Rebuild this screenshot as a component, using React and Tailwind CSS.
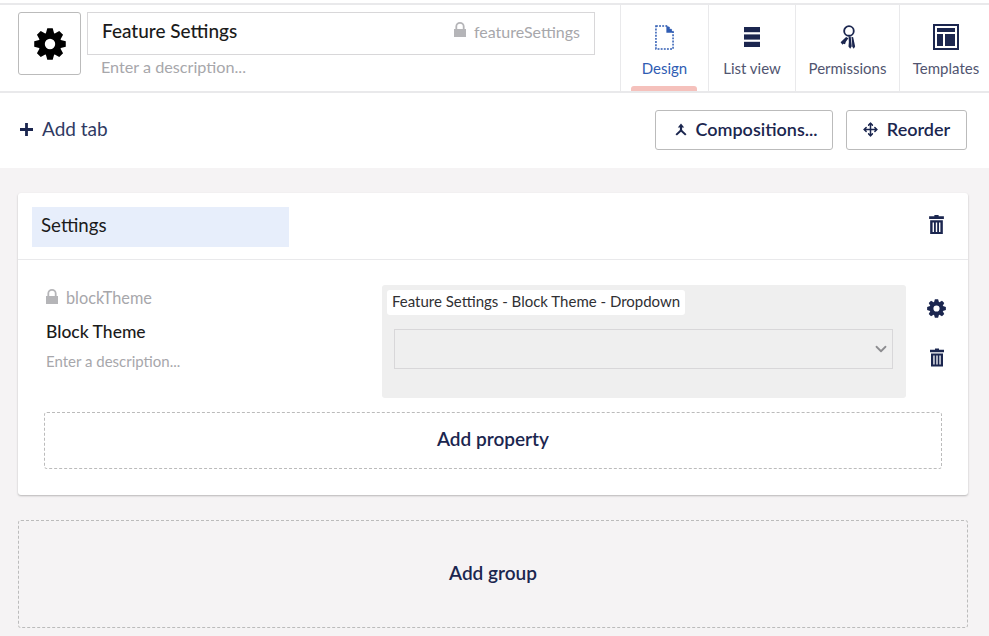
import { Move, ChevronDown } from 'lucide-react';

// 8 toothed cog, same shape as the umbraco settings icon
function gearPath() {
  let d = '';
  for (let i = 0; i < 8; i++) {
    const a = (i * Math.PI) / 4 - Math.PI / 2;
    const pts = [
      [11.6, a - 0.36],
      [16, a - 0.17],
      [16, a + 0.17],
      [11.6, a + 0.36],
    ];
    pts.forEach(([r, t], j) => {
      const x = (16 + r * Math.cos(t)).toFixed(2);
      const y = (16 + r * Math.sin(t)).toFixed(2);
      d += `${i === 0 && j === 0 ? 'M' : 'L'}${x} ${y}`;
    });
  }
  return d + 'zM16 10.8a5.2 5.2 0 1 0 0 10.4 5.2 5.2 0 0 0 0-10.4z';
}

function Gear({ className }) {
  return (
    <svg viewBox="0 0 32 32" className={className} fill="currentColor">
      <path fillRule="evenodd" d={gearPath()} />
    </svg>
  );
}

function Trash({ className }) {
  return (
    <svg viewBox="0 0 14 18" className={className} fill="currentColor">
      <path d="M5 0h4v1.2h5v2.6H0V1.2h5z" />
      <path fillRule="evenodd" d="M1 5h12v13H1zM3.3 7v9h1.3V7zM6.35 7v9h1.3V7zM9.4 7v9h1.3V7z" />
    </svg>
  );
}

function LockIcon({ className }) {
  return (
    <svg viewBox="0 0 12 15" className={className} fill="#b5b5b8">
      <path fillRule="evenodd" d="M6 0a4.6 4.6 0 0 1 4.6 4.6V7H12v8H0V7h1.4V4.6A4.6 4.6 0 0 1 6 0zm0 1.8a2.8 2.8 0 0 0-2.8 2.8V7h5.6V4.6A2.8 2.8 0 0 0 6 1.8z" />
    </svg>
  );
}

function PlusIcon() {
  return (
    <svg viewBox="0 0 13 13" className="w-[13px] h-[13px]" fill="#1b264f">
      <path d="M5.1 0h2.8v5.1H13v2.8H7.9V13H5.1V7.9H0V5.1h5.1z" />
    </svg>
  );
}

function CompositionIcon() {
  return (
    <svg viewBox="0 0 12 13" className="w-[12px] h-[13px]" fill="#1b264f">
      <path d="M6 0.5L9.2 4.5H7.1V7L11.5 11.2 10.1 12.6 6 8.8 1.9 12.6 0.5 11.2 4.9 7V4.5H2.8z" />
    </svg>
  );
}

function DesignIcon() {
  return (
    <svg viewBox="0 0 20 26" className="w-[19px] h-[25px]" fill="none">
      <path d="M1 1h12l6 6v18H1z" stroke="#2f5cb3" strokeWidth="1.6" strokeDasharray="2 1.3" />
      <path d="M12 0l8 8h-8z" fill="#2f5cb3" />
    </svg>
  );
}

function ListIcon() {
  return (
    <svg viewBox="0 0 16 20" className="w-4 h-5" fill="#1b264f">
      <rect y="0" width="16" height="5.2" />
      <rect y="7.4" width="16" height="5.2" />
      <rect y="14.8" width="16" height="5.2" />
    </svg>
  );
}

function KeysIcon() {
  return (
    <svg viewBox="0 0 16 26" className="w-[16px] h-[25px]" fill="#1b264f">
      <circle cx="9" cy="6.2" r="5" fill="none" stroke="#1b264f" strokeWidth="1.9" />
      <path d="M6 12.5l2.4 1.4-2.6 3.6-.9 2.6-1.7-.6-.9 1-2-2.6z" />
      <path d="M8.6 11.6l2.2.4.6 5.2.5 4.8-1.6 2.8-1.8-2.4.4-4.6z" />
      <path d="M11.6 12.2l1.8.5 1.1 5.3.9 4.4-1.4 2.4-1.6-2.2-.2-5z" />
    </svg>
  );
}

function TemplatesIcon() {
  return (
    <svg viewBox="0 0 26 26" className="w-[26px] h-[26px]" fill="#1b264f">
      <path fillRule="evenodd" d="M0 0h26v26H0zM2 2v22h22V2z" />
      <rect x="4" y="4" width="18" height="4" />
      <rect x="4" y="10" width="6" height="12" />
      <rect x="12" y="10" width="10" height="12" />
    </svg>
  );
}

const tabs = [
  { label: 'Design', icon: <DesignIcon />, active: true, width: 'w-[88px]' },
  { label: 'List view', icon: <ListIcon />, width: 'w-[87px]' },
  { label: 'Permissions', icon: <KeysIcon />, width: 'w-[104px]' },
  { label: 'Templates', icon: <TemplatesIcon />, width: 'w-[90px] pl-[3px]' },
];

function Tab({ tab }) {
  return (
    <div className={`relative ${tab.width} h-[86px] border-l border-[#e9e9eb] flex flex-col items-center pt-[18px]`}>
      <div className="h-[28px] flex items-center justify-center">{tab.icon}</div>
      <span className={`mt-[7px] text-[15px] leading-5 whitespace-nowrap ${tab.active ? 'text-[#2f5cb3]' : 'text-[#515570]'}`}>{tab.label}</span>
      {tab.active && <div className="absolute left-[10px] bottom-0 w-[66px] h-[5px] rounded-t-[3px] bg-[#f5c1bc]" />}
    </div>
  );
}

export default function App() {
  return (
    <div className="h-[636px] w-[989px] overflow-hidden bg-[#f5f3f4] text-[#1b264f]" style={{ fontFamily: 'Lato, sans-serif' }}>
      <div className="bg-white pt-[3px]">
        <header className="h-[90px] border-y-2 border-[#e9e9eb] flex items-start">
          <div className="flex-1 flex items-start pl-[18px] pt-[7px]">
            <div className="w-[63px] h-[63px] shrink-0 rounded-[3px] border border-[#bbbbbb] flex items-center justify-center text-black">
              <Gear className="w-[32px] h-[32px]" />
            </div>
            <div className="ml-[6px] w-[508px]">
              <div className="h-[43px] border border-[#d8d7d9] flex items-center justify-between pl-[14px] pr-[14px]">
                <span className="text-[19px] font-medium text-[#1b1b1b] pb-[4px]">Feature Settings</span>
                <span className="flex items-center gap-[8px] text-[16px] text-[#a7a7ab] pb-[4px]">
                  <LockIcon className="w-[12px] h-[15px] mb-[4px]" />
                  featureSettings
                </span>
              </div>
              <div className="pl-[14px] text-[16.2px] leading-6 text-[#a7a7ab]">Enter a description...</div>
            </div>
          </div>
          <nav className="flex">
            {tabs.map((t) => <Tab key={t.label} tab={t} />)}
          </nav>
        </header>
        <div className="h-[75px] pb-[2px] flex items-center justify-between pl-[20px] pr-[22px]">
          <button className="flex items-center gap-[9px] text-[19px] text-[#2f3a63]">
            <PlusIcon />
            Add tab
          </button>
          <div className="flex gap-[13px]">
            <button className="w-[178px] h-[40px] rounded-[3px] border border-[#bbbbbb] flex items-center justify-center gap-[8px] pl-[5px] text-[18px] text-[#1b264f]">
              <CompositionIcon />
              <span className="font-semibold">Compositions...</span>
            </button>
            <button className="w-[121px] h-[40px] rounded-[3px] border border-[#bbbbbb] flex items-center justify-center gap-[9px] text-[18px] text-[#1b264f]">
              <Move className="w-[15px] h-[15px]" strokeWidth={2.4} />
              <span className="font-semibold">Reorder</span>
            </button>
          </div>
        </div>
      </div>

      <main className="pt-[25px] pl-[18px] pr-[21px]">
        <section className="bg-white rounded-[3px] shadow-[0_1px_2px_rgba(0,0,0,0.25)] h-[302px]">
          <div className="h-[67px] border-b border-[#e9e9eb] flex items-start justify-between pt-[14px] pl-[14px] pr-[24px]">
            <div className="w-[257px] h-[40px] bg-[#e7eefb] flex items-center pl-[9px] pb-[4px] text-[18.7px] text-[#1b1b1b]">Settings</div>
            <Trash className="w-[15px] h-[19px] mt-[8px] text-[#1b264f]" />
          </div>
          <div className="pt-[25px] pl-[26px] pr-[22px]">
            <div className="flex items-start">
              <div className="w-[338px] shrink-0 pl-[2px]">
                <div className="flex items-center gap-[8px] text-[16.3px] leading-5 text-[#a7a7ab] pt-[3px]">
                  <LockIcon className="w-[12px] h-[15px] mb-[4px]" />
                  blockTheme
                </div>
                <div className="mt-[12px] text-[17.5px] leading-6 font-medium text-[#1b1b1b]">Block Theme</div>
                <div className="mt-[7px] text-[15px] leading-5 text-[#a7a7ab]">Enter a description...</div>
              </div>
              <div className="w-[524px] h-[113px] shrink-0 rounded-[3px] bg-[#efefef] pt-[5px] pl-[5px]">
                <span className="block w-max bg-white rounded-[3px] px-[5px] pb-[2px] pt-[0px] text-[15px] leading-[23px] text-[#303033]">Feature Settings - Block Theme - Dropdown</span>
                <div className="mt-[14px] ml-[7px] w-[499px] h-[40px] border border-[#d8d7d9] flex items-center justify-end pr-[2px]">
                  <ChevronDown className="w-[18px] h-[18px] text-[#8d8d90]" strokeWidth={2.4} />
                </div>
              </div>
              <div className="flex-1 flex flex-col items-center pl-[21px] pt-[14px] gap-[30px] text-[#1b264f]">
                <Gear className="w-[19px] h-[19px]" />
                <Trash className="w-[14px] h-[19px]" />
              </div>
            </div>
            <div className="mt-[14px] pb-[2px] h-[57px] w-[898px] rounded-[3px] border border-dashed border-[#bbbbbb] flex items-center justify-center text-[19px] font-semibold text-[#1b264f]">
              Add property
            </div>
          </div>
        </section>
        <div className="mt-[25px] pb-[2px] h-[108px] rounded-[3px] border border-dashed border-[#bbbbbb] flex items-center justify-center text-[19px] font-semibold text-[#1b264f]">
          Add group
        </div>
      </main>
    </div>
  );
}
